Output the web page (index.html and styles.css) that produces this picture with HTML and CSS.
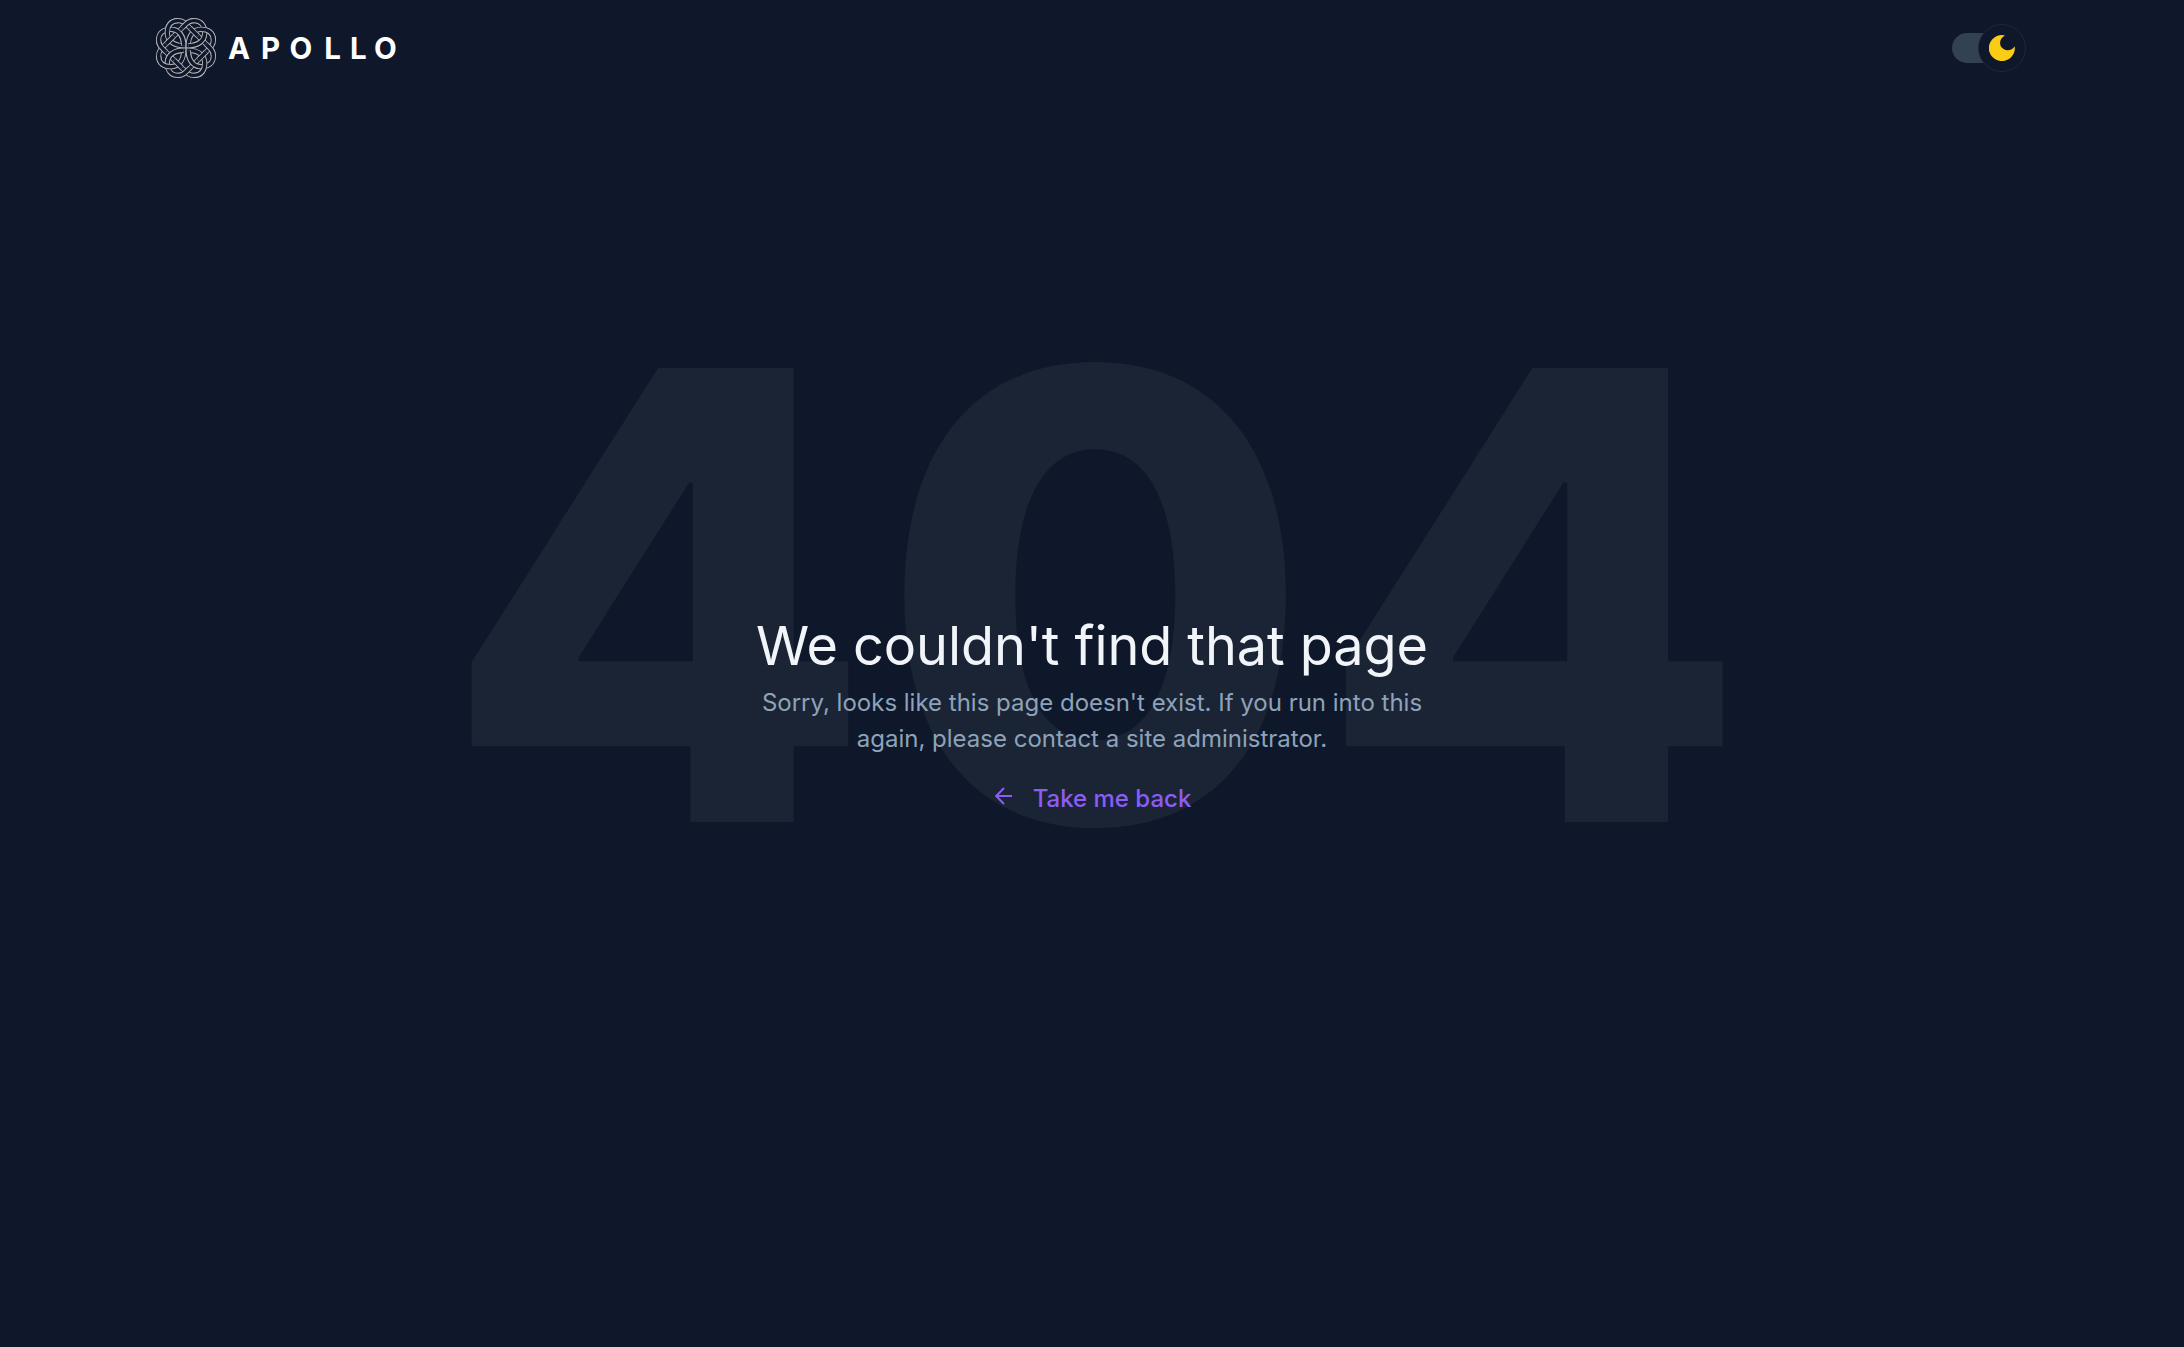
FILE: index.html
```html
<!DOCTYPE html>
<html lang="en">
<head>
<meta charset="utf-8">
<title>Apollo</title>
<link rel="stylesheet" href="styles.css">
</head>
<body>
<header class="header">
  <a class="brand">
    <svg class="knot" viewBox="0 0 60 60" aria-hidden="true">
      <defs>
        <path id="strand" d="M42 18 L34 10 C29 5 27 2.600 22 2.600 C14.500 2.600 11.300 8 11.300 15 C11.300 22 17 27.700 27.700 27.700 C27.700 17 22 11.300 15 11.300 C8 11.300 2.600 14.500 2.600 22 C2.600 27 5 29 10 34 L18 42"/>
        <path id="crossings" d="M42 18 L34 10 M22 2.600 C14.500 2.600 11.300 8 11.300 15 M27.700 27.700 C27.700 17 22 11.300 15 11.300 M2.600 22 C2.600 27 5 29 10 34"/>
        <g id="under"><use href="#strand" class="edge"/><use href="#strand" class="fill"/></g>
        <g id="over"><use href="#crossings" class="edge"/><use href="#crossings" class="fill"/></g>
      </defs>
      <use href="#under"/>
      <use href="#under" transform="rotate(90 30 30)"/>
      <use href="#under" transform="rotate(180 30 30)"/>
      <use href="#under" transform="rotate(270 30 30)"/>
      <use href="#over"/>
      <use href="#over" transform="rotate(90 30 30)"/>
      <use href="#over" transform="rotate(180 30 30)"/>
      <use href="#over" transform="rotate(270 30 30)"/>
    </svg>
    <span class="wordmark"><span class="k1">A</span><span class="k2">P</span><span class="k3">O</span><span class="k4">L</span><span class="k5">L</span><span>O</span></span>
  </a>
  <div class="toggle">
    <div class="knob">
      <svg class="moon" viewBox="0 0 26 26"><path d="M16 .5 A13 13 0 1 0 25.700 11.200 C23.500 15 18.500 16.500 14.500 14 C9.500 11 10 3.500 16 .5Z"/></svg>
    </div>
  </div>
</header>
<main class="main">
  <div class="code">404</div>
  <section class="message">
    <h1 class="title">We couldn't find that page</h1>
    <p class="text">Sorry, looks like this page doesn't exist. If you run into this again, please contact a site administrator.</p>
    <a class="back">
      <svg class="arrow" viewBox="0 0 18 18"><path d="M17 9H1.500M9 1L1.200 9L9 17"/></svg>
      <span>Take me back</span>
    </a>
  </section>
</main>
</body>
</html>
```
FILE: styles.css
```css
body {
  margin: 0;
  background: #0f172a;
  color: #f1f5f9;
  font-family: Inter, sans-serif;
}
.header {
  height: 96px;
  box-sizing: border-box;
  display: flex;
  align-items: center;
  justify-content: space-between;
  padding: 0 158px 0 156px;
}
.brand {
  display: flex;
  align-items: center;
  gap: 12px;
}
.knot {
  width: 60px;
  height: 60px;
  fill: none;
}
.edge { stroke: #b4b5b8; stroke-width: 5.2; }
.fill { stroke: #0f172a; stroke-width: 3.4; }
.wordmark {
  color: #fff;
  font-size: 29.5px;
  font-weight: 700;
  line-height: 36px;
}
.k1 { letter-spacing: 11px; }
.k2 { letter-spacing: 9.3px; }
.k3 { letter-spacing: 12.1px; }
.k4 { letter-spacing: 9px; }
.k5 { letter-spacing: 7.2px; }
.toggle {
  display: flex;
  align-items: center;
}
.toggle::before {
  content: "";
  width: 44px;
  height: 30px;
  margin-right: -18px;
  border-radius: 15px 0 0 15px;
  background: #334155;
}
.knob {
  position: relative;
  width: 48px;
  height: 48px;
  box-sizing: border-box;
  display: flex;
  align-items: center;
  justify-content: center;
  border: 1px solid #1e293b;
  border-radius: 50%;
  background: #0f172a;
}
.moon {
  width: 26px;
  height: 26px;
  fill: #facc15;
}
.main {
  display: grid;
  height: 1251px;
  justify-items: center;
  align-items: start;
}
.code {
  grid-area: 1 / 1;
  padding: 187px 0 0 13px;
  font-size: 624px;
  font-weight: 800;
  line-height: 1;
  letter-spacing: 6.5px;
  color: #1b2435;
}
.message {
  grid-area: 1 / 1;
  padding-top: 523px;
  display: flex;
  flex-direction: column;
  align-items: center;
  text-align: center;
}
.title {
  margin: 0;
  font-size: 54px;
  font-weight: 400;
  line-height: 54px;
  letter-spacing: -0.08px;
}
.text {
  margin: 12px 0 24px;
  width: 680px;
  font-size: 24px;
  line-height: 36px;
  color: #8da3ba;
}
.back {
  display: flex;
  gap: 20px;
  padding-left: 2px;
  font-size: 24px;
  font-weight: 500;
  line-height: 36px;
  color: #8b5cf6;
}
.arrow {
  width: 18px;
  height: 18px;
  margin-top: 6px;
  fill: none;
  stroke: currentColor;
  stroke-width: 2;
}
```
